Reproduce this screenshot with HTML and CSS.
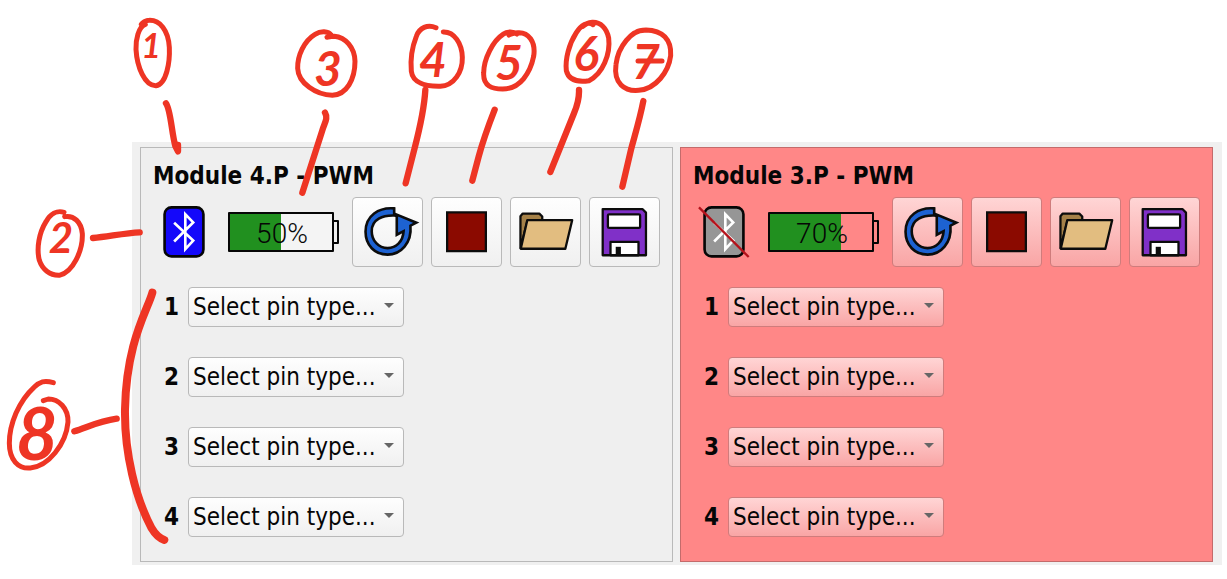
FILE: index.html
```html
<!DOCTYPE html>
<html lang="en">
<head>
<meta charset="utf-8">
<title>Modules</title>
<link rel="stylesheet" href="styles.css">
</head>
<body>
<svg class="symbols" aria-hidden="true">
  <symbol id="rune" viewBox="99 195 126 158">
    <path d="M132 246L190 300L166 326V220L190 245L132 303" fill="none" stroke="#fff" stroke-width="8"/>
  </symbol>
  <symbol id="reload" viewBox="22 36 211 209">
    <path d="M148 68V90C114 89 79 100 79 138C79 167 100 190 128 190C153 190 175 171 177 138L156 149V87L216 112L198 121C203 174 168 210 128 210C88 210 60 181 60 140C60 90 101 64 148 68Z" fill="#1d62d2" stroke="#0c0c0c" stroke-width="8"/>
  </symbol>
  <symbol id="stop" viewBox="259 36 211 209">
    <path d="M305 80H424V199H305Z" fill="#8b0a00" stroke="#0c0c0c" stroke-width="7"/>
  </symbol>
  <symbol id="folder" viewBox="16 36 212 209">
    <path d="M45 190V92L52 84H103L112 93V106L66 108Z" fill="#a58148" stroke="#0c0c0c" stroke-width="7" stroke-linejoin="round"/>
    <path d="M66 104H204L183 192H46Z" fill="#e2bd80" stroke="#0c0c0c" stroke-width="7" stroke-linejoin="round"/>
  </symbol>
  <symbol id="save" viewBox="254 36 212 209">
    <path d="M293 70H415L426 81V212H293Z" fill="#8030c8" stroke="#0c0c0c" stroke-width="7" stroke-linejoin="round"/>
    <rect x="309" y="86" width="99" height="42" rx="4" fill="#fff" stroke="#0c0c0c" stroke-width="7"/>
    <path d="M317 212V171H403V212Z" fill="#fff" stroke="#0c0c0c" stroke-width="7" stroke-linejoin="round"/>
    <path d="M333 186H349V212H333Z" fill="#0c0c0c"/>
  </symbol>
</svg>

<main class="window">
  <section class="module">
    <h2 class="title">Module 4.P - PWM</h2>
    <div class="toolbar">
      <svg class="bluetooth" viewBox="99 195 126 158" role="img" aria-label="Connected">
        <rect x="103" y="199" width="118" height="149" rx="21" fill="#1408fa" stroke="#060606" stroke-width="8"/>
        <use href="#rune" x="99" y="195" width="126" height="158"/>
      </svg>
      <svg class="battery" viewBox="0 0 113 42" role="img" aria-label="Battery 50%">
        <path d="M2 2H54V40H2Z" fill="#21901f"/>
        <path d="M54 2H106V40H54Z" fill="#f4f4f4"/>
        <path d="M2 2H106V40H2ZM106 10H111V32H106" class="outline"/>
        <text x="55" y="32" class="charge">50%</text>
      </svg>
      <button class="tool" type="button" aria-label="Reload"><svg><use href="#reload"/></svg></button>
      <button class="tool" type="button" aria-label="Stop"><svg><use href="#stop"/></svg></button>
      <button class="tool" type="button" aria-label="Open"><svg><use href="#folder"/></svg></button>
      <button class="tool" type="button" aria-label="Save"><svg><use href="#save"/></svg></button>
    </div>
    <div class="pins">
      <div class="pin"><label for="a1">1</label><span class="combo"><select id="a1"><option>Select pin type...</option></select></span></div>
      <div class="pin"><label for="a2">2</label><span class="combo"><select id="a2"><option>Select pin type...</option></select></span></div>
      <div class="pin"><label for="a3">3</label><span class="combo"><select id="a3"><option>Select pin type...</option></select></span></div>
      <div class="pin"><label for="a4">4</label><span class="combo"><select id="a4"><option>Select pin type...</option></select></span></div>
    </div>
  </section>

  <section class="module offline">
    <h2 class="title">Module 3.P - PWM</h2>
    <div class="toolbar">
      <svg class="bluetooth" viewBox="99 195 126 158" role="img" aria-label="Disconnected">
        <rect x="103" y="199" width="118" height="149" rx="21" fill="#969696" stroke="#060606" stroke-width="8"/>
        <use href="#rune" x="99" y="195" width="126" height="158"/>
        <path d="M86 199L237 350" stroke="#b5121b" stroke-width="7"/>
      </svg>
      <svg class="battery" viewBox="0 0 113 42" role="img" aria-label="Battery 70%">
        <path d="M2 2H74V40H2Z" fill="#21901f"/>
        <path d="M2 2H106V40H2ZM106 10H111V32H106" class="outline"/>
        <text x="55" y="32" class="charge">70%</text>
      </svg>
      <button class="tool" type="button" aria-label="Reload"><svg><use href="#reload"/></svg></button>
      <button class="tool" type="button" aria-label="Stop"><svg><use href="#stop"/></svg></button>
      <button class="tool" type="button" aria-label="Open"><svg><use href="#folder"/></svg></button>
      <button class="tool" type="button" aria-label="Save"><svg><use href="#save"/></svg></button>
    </div>
    <div class="pins">
      <div class="pin"><label for="b1">1</label><span class="combo"><select id="b1"><option>Select pin type...</option></select></span></div>
      <div class="pin"><label for="b2">2</label><span class="combo"><select id="b2"><option>Select pin type...</option></select></span></div>
      <div class="pin"><label for="b3">3</label><span class="combo"><select id="b3"><option>Select pin type...</option></select></span></div>
      <div class="pin"><label for="b4">4</label><span class="combo"><select id="b4"><option>Select pin type...</option></select></span></div>
    </div>
  </section>
</main>

<svg class="notes" width="1227" height="579" viewBox="0 0 1227 579">
  <g class="ink" transform="translate(120 10) scale(.33333)">
    <path d="M76 43C55 50 47 90 48 118C51 170 74 228 108 227C140 222 150 155 148 112C145 60 119 30 88 31C77 31 67 38 64 43"/>
    <path d="M634 76C625 62 602 62 585 73C552 93 532 137 533 175C535 220 589 255 637 256C680 254 705 208 705 154C704 112 676 82 643 79C633 79 626 81 621 82"/>
    <path class="thick" d="M138 280C152 298 155 370 166 408L174 424L174 405"/>
    <path class="thick" d="M615 308C625 325 614 338 607 361L547 548"/>
  </g>
  <g class="ink" transform="translate(390 10) scale(.33333)">
    <path d="M138 53C113 42 88 53 79 79C66 112 61 153 64 184C68 219 108 230 151 229C193 226 218 185 217 142C216 101 193 65 160 66"/>
    <path d="M381 72C371 64 352 63 339 73C309 92 281 147 281 189C279 229 307 237 338 237C391 237 421 188 431 139C438 95 415 66 384 68C372 69 363 71 357 75"/>
    <path d="M609 44C594 33 573 46 559 68C537 102 525 148 529 182C536 211 564 217 597 212C638 192 662 132 656 84C650 54 631 36 607 37C595 38 586 42 579 49"/>
    <path d="M770 61C724 56 684 112 678 163C670 220 704 245 746 241C798 237 836 185 842 137C845 88 817 61 768 60C756 60 745 62 738 67"/>
    <path class="thick" d="M106 240C103 290 88 360 74 414L47 520M314 299C298 340 278 395 266 440L247 512M567 240C568 265 562 286 552 310L481 486M760 273C750 325 735 374 724 415L697 530"/>
  </g>
  <g class="ink" transform="translate(0 200) scale(.33333)">
    <path d="M192 37C171 30 151 42 138 65C117 99 109 145 118 181C127 208 149 227 178 226C219 217 249 151 247 101C244 66 221 45 194 50"/>
    <path d="M160 548C133 540 119 545 102 562C57 603 28 671 28 730C28 780 55 807 91 804C145 799 198 733 204 666C205 624 176 597 145 597L130 602"/>
    <path class="thick" d="M279 114C328 109 376 99 419 97M223 694C266 680 299 663 350 656"/>
    <path class="brace" d="M457 278C443 330 379 425 375 628C373 760 407 895 455 985C465 1002 476 1014 493 1020"/>
  </g>
  <g class="number">
    <text x="151" y="58" class="small">1</text>
    <text x="61" y="253" class="medium">2</text>
    <text x="328" y="86">3</text>
    <text x="433" y="77">4</text>
    <text x="509" y="80">5</text>
    <text x="586" y="71">6</text>
    <text x="646" y="79">7</text>
    <text x="37" y="460" class="large">8</text>
  </g>
  <path class="ink bar" d="M638 61L662 61"/>
</svg>
</body>
</html>
```
FILE: styles.css
```css
* { box-sizing: border-box; }

body {
  margin: 0;
  padding: 142px 5px 15px 132px;
  background: #fff;
  color: #060606;
  font: 24px/30px "DejaVu Sans Condensed", "DejaVu Sans", sans-serif;
  font-stretch: condensed;
}

.symbols { position: absolute; width: 0; height: 0; }

.window {
  display: flex;
  gap: 7px;
  padding: 5px 9px 3px 8px;
  background: #f0f0f0;
}

.module {
  flex: 1;
  padding: 13px 12px 24px;
  border: 1px solid #b9b9b9;
  background: #efefef;
  --face: linear-gradient(#fefefe, #f0f0f0);
  --edge: #b9b9b9;
}

.offline {
  border-color: #c46b6b;
  background: #ff8787;
  --face: linear-gradient(#ffd5d5, #f9a5a5);
  --edge: #cf7c7c;
}

.title { margin: 0; font-size: 24px; line-height: 30px; font-weight: bold; }

.toolbar {
  display: flex;
  align-items: center;
  gap: 8px;
  margin-top: 6px;
  padding-left: 10px;
}

.bluetooth { width: 42px; height: 52px; margin-right: 14px; overflow: visible; flex: none; }
.battery { width: 113px; height: 42px; margin-right: 4px; flex: none; }
.outline { fill: none; stroke: #060606; stroke-width: 2; stroke-linejoin: round; }
.charge { font: 300 28px Roboto, sans-serif; text-anchor: middle; fill: #060606; }

.tool {
  flex: none;
  width: 71px;
  height: 70px;
  padding: 0;
  border: 1px solid var(--edge);
  border-radius: 4px;
  background: var(--face);
}
.tool svg { display: block; width: 100%; height: 100%; }

.pins { display: grid; gap: 30px; margin-top: 20px; padding-left: 11px; }
.pin { display: flex; align-items: center; gap: 9px; font-weight: bold; }
.pin label { width: 15px; }

.combo { position: relative; width: 216px; }
.combo::after {
  content: "";
  position: absolute;
  right: 10px;
  top: 16px;
  border: 5px solid transparent;
  border-top-color: #666;
  border-bottom: 0;
  pointer-events: none;
}
.combo select {
  display: block;
  appearance: none;
  width: 100%;
  height: 40px;
  margin: 0;
  padding: 0 0 0 4px;
  border: 1px solid var(--edge);
  border-radius: 4px;
  background: var(--face);
  color: #060606;
  font: 24px/30px "DejaVu Sans Condensed", "DejaVu Sans", sans-serif;
  font-stretch: condensed;
}

/* Ink marks lie over the window */
.notes { position: absolute; left: 0; top: 0; pointer-events: none; }
.ink { fill: none; stroke: #ee3524; stroke-width: 15; stroke-linecap: round; stroke-linejoin: round; }
.thick { stroke-width: 19; }
.brace { stroke-width: 24; }
.bar { stroke-width: 5; }
.number { font: italic bold 48px Lato, sans-serif; fill: #ee3524; text-anchor: middle; }
.small { font-size: 34px; }
.medium { font-size: 42px; }
.large { font-size: 72px; }
```
